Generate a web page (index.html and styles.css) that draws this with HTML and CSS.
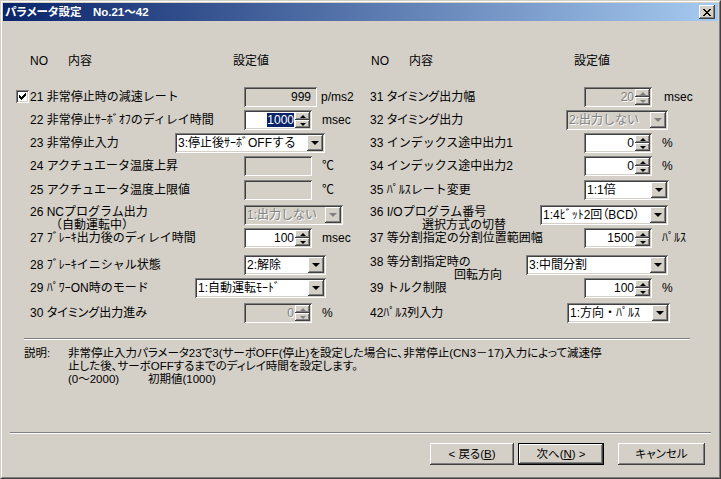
FILE: index.html
```html
<!DOCTYPE html>
<html lang="ja">
<head>
<meta charset="utf-8">
<title>パラメータ設定</title>
<link rel="stylesheet" href="styles.css">
</head>
<body>
<div class="window">
  <div class="frame">
    <div class="titlebar">
      <span class="title">パラメータ設定　No.21～42</span>
      <span class="closebtn raised"><svg width="8" height="7" viewBox="0 0 8 7"><path d="M0 0h2v1H0zM6 0h2v1H6zM1 1h2v1H1zM5 1h2v1H5zM2 2h4v1H2zM3 3h2v1H3zM2 4h4v1H2zM1 5h2v1H1zM5 5h2v1H5zM0 6h2v1H0zM6 6h2v1H6z" fill="#000"/></svg></span>
    </div>
    <div class="client">
      <div class="columns">
        <div class="col col-left">
          <div class="head"><span class="h-no">NO</span><span class="h-name">内容</span><span class="h-val">設定値</span></div>
          <div class="rows">
            <div class="row">
              <span class="gut"><span class="checkbox"><svg width="7" height="7" viewBox="0 0 7 7"><path d="M6 0h1v3H6zM5 1h1v3H5zM4 2h1v3H4zM3 3h1v3H3zM2 4h1v3H2zM1 3h1v3H1zM0 2h1v3H0z" fill="#000"/></svg></span></span>
              <span class="lbl">21 非常停止時の減速レート</span>
              <span class="field w73">999</span>
              <span class="unit u4">p/ms2</span>
            </div>
            <div class="row">
              <span class="gut"></span>
              <span class="lbl">22 非常停止ｻｰﾎﾞｵﾌのディレイ時間</span>
              <span class="spin"><span class="val"><span class="sel">1000</span></span><span class="btns"><span class="sb up"></span><span class="sb dn"></span></span></span>
              <span class="unit">msec</span>
            </div>
            <div class="row">
              <span class="gut"></span>
              <span class="lbl">23 非常停止入力</span>
              <span class="combo c23"><span class="val">3:停止後ｻｰﾎﾞOFFする</span><span class="dd"></span></span>
            </div>
            <div class="row">
              <span class="gut"></span>
              <span class="lbl">24 アクチュエータ温度上昇</span>
              <span class="field"></span>
              <span class="unit">℃</span>
            </div>
            <div class="row">
              <span class="gut"></span>
              <span class="lbl">25 アクチュエータ温度上限値</span>
              <span class="field"></span>
              <span class="unit">℃</span>
            </div>
            <div class="row">
              <span class="gut"></span>
              <span class="lbl two">26 NCプログラム出力<span class="sub s26">（自動運転中）</span></span>
              <span class="combo dis c26"><span class="val">1:出力しない</span><span class="dd"></span></span>
            </div>
            <div class="row">
              <span class="gut"></span>
              <span class="lbl">27 ﾌﾞﾚｰｷ出力後のディレイ時間</span>
              <span class="spin"><span class="val">100</span><span class="btns"><span class="sb up"></span><span class="sb dn"></span></span></span>
              <span class="unit">msec</span>
            </div>
            <div class="row">
              <span class="gut"></span>
              <span class="lbl">28 ﾌﾞﾚｰｷイニシャル状態</span>
              <span class="combo c28"><span class="val">2:解除</span><span class="dd"></span></span>
            </div>
            <div class="row">
              <span class="gut"></span>
              <span class="lbl">29 ﾊﾟﾜｰON時のモード</span>
              <span class="combo c29"><span class="val">1:自動運転ﾓｰﾄﾞ</span><span class="dd"></span></span>
            </div>
            <div class="row">
              <span class="gut"></span>
              <span class="lbl">30 <span class="prop">タイミング</span>出力進み</span>
              <span class="spin dis"><span class="val">0</span><span class="btns"><span class="sb up"></span><span class="sb dn"></span></span></span>
              <span class="unit">%</span>
            </div>
          </div>
        </div>
        <div class="col col-right">
          <div class="head"><span class="h-no">NO</span><span class="h-name">内容</span><span class="h-val">設定値</span></div>
          <div class="rows">
            <div class="row">
              <span class="gut"></span>
              <span class="lbl">31 <span class="prop">タイミング</span>出力幅</span>
              <span class="spin dis"><span class="val">20</span><span class="btns"><span class="sb up"></span><span class="sb dn"></span></span></span>
              <span class="unit u12">msec</span>
            </div>
            <div class="row">
              <span class="gut"></span>
              <span class="lbl">32 <span class="prop">タイミング</span>出力</span>
              <span class="combo dis c32"><span class="val">2:出力しない</span><span class="dd"></span></span>
            </div>
            <div class="row">
              <span class="gut"></span>
              <span class="lbl">33 インデックス途中出力1</span>
              <span class="spin"><span class="val">0</span><span class="btns"><span class="sb up"></span><span class="sb dn"></span></span></span>
              <span class="unit">%</span>
            </div>
            <div class="row">
              <span class="gut"></span>
              <span class="lbl">34 インデックス途中出力2</span>
              <span class="spin"><span class="val">0</span><span class="btns"><span class="sb up"></span><span class="sb dn"></span></span></span>
              <span class="unit">%</span>
            </div>
            <div class="row">
              <span class="gut"></span>
              <span class="lbl">35 ﾊﾟﾙｽレート変更</span>
              <span class="combo c35"><span class="val">1:1倍</span><span class="dd"></span></span>
            </div>
            <div class="row">
              <span class="gut"></span>
              <span class="lbl two">36 I/Oプログラム番号<span class="sub s36">選択方式の切替</span></span>
              <span class="combo c36"><span class="val prop">1:4ﾋﾞｯﾄ2回（BCD）</span><span class="dd"></span></span>
            </div>
            <div class="row">
              <span class="gut"></span>
              <span class="lbl">37 等分割指定の分割位置範囲幅</span>
              <span class="spin"><span class="val">1500</span><span class="btns"><span class="sb up"></span><span class="sb dn"></span></span></span>
              <span class="unit">ﾊﾟﾙｽ</span>
            </div>
            <div class="row">
              <span class="gut"></span>
              <span class="lbl two">38 等分割指定時の<span class="sub s38">回転方向</span></span>
              <span class="combo c38"><span class="val">3:中間分割</span><span class="dd"></span></span>
            </div>
            <div class="row">
              <span class="gut"></span>
              <span class="lbl">39 トルク制限</span>
              <span class="spin"><span class="val">100</span><span class="btns"><span class="sb up"></span><span class="sb dn"></span></span></span>
              <span class="unit">%</span>
            </div>
            <div class="row">
              <span class="gut"></span>
              <span class="lbl">42ﾊﾟﾙｽ列入力</span>
              <span class="combo c42"><span class="val">1:方向・ﾊﾟﾙｽ</span><span class="dd"></span></span>
            </div>
          </div>
        </div>
      </div>
      <div class="rule"></div>
      <div class="desc">
        <span class="desc-label">説明:</span>
        <div class="desc-body">
          <div>非常停止入力パラメータ23で3(サーボOFF(停止)を設定した場合に、非常停止(CN3－17)入力によって減速停</div>
          <div>止した後、サーボOFFするまでのディレイ時間を設定します。</div>
          <div><span class="range">(0～2000)</span>初期値(1000)</div>
        </div>
      </div>
      <div class="spacer"></div>
      <div class="footer-rule"></div>
      <div class="buttons">
        <span class="btn back">&lt; 戻る(<u>B</u>)</span>
        <span class="btn next default">次へ(<u>N</u>) &gt;</span>
        <span class="btn cancel">キャンセル</span>
      </div>
    </div>
  </div>
</div>
</body>
</html>
```

FILE: styles.css
```css
* { box-sizing: border-box; }
html, body { margin: 0; padding: 0; background: #d4d0c8; }
body {
  font-family: "Liberation Sans", "Noto Sans CJK JP", sans-serif;
  font-size: 11.5px;
  color: #000;
  font-feature-settings: "palt";
}

.window {
  width: 721px;
  height: 479px;
  border: 1px solid;
  border-color: #d4d0c8 #404040 #404040 #d4d0c8;
}
.frame {
  height: 100%;
  border: 1px solid;
  border-color: #fff #808080 #808080 #fff;
  padding: 1px;
  display: flex;
  flex-direction: column;
}

.raised {
  background: #d4d0c8;
  box-shadow: inset -1px -1px #404040, inset 1px 1px #fff, inset -2px -2px #808080, inset 2px 2px #d4d0c8;
}

/* title bar */
.titlebar {
  flex: none;
  height: 18px;
  display: flex;
  align-items: center;
  justify-content: space-between;
  padding: 0 3px 0 2px;
  background: linear-gradient(to right, #0a246a, #a6caf0);
}
.title {
  color: #fff;
  font-weight: bold;
  font-size: 11.5px;
  line-height: 18px;
  white-space: nowrap;
}
.closebtn {
  width: 16px;
  height: 14px;
  display: flex;
  align-items: center;
  justify-content: center;
}

/* client */
.client {
  flex: 1;
  display: flex;
  flex-direction: column;
  padding: 30px 13px 11px 13px;
}
.columns {
  display: flex;
  font-size: 12px;
  font-feature-settings: normal;
}
.columns .prop { font-feature-settings: "palt"; }
.col-left { width: 339px; flex: none; }
.col-right { flex: 1; }

.head {
  display: flex;
  height: 20px;
  line-height: 20px;
  padding-left: 14px;
}
.col-right .head { padding-left: 16px; }
.h-no { width: 38px; }
.h-name { width: 165px; }

.rows {
  margin-top: 16px;
  display: grid;
  grid-template-rows: 23px 23px 23px 24px 25px 23px 27px 23px 25px 20px;
}
.row {
  display: flex;
  align-items: flex-start;
  height: 20px;
}
.gut { width: 15px; flex: none; padding-top: 3px; }
.col-left .gut { width: 14px; }
.lbl {
  width: 214px;
  flex: none;
  line-height: 20px;
  white-space: nowrap;
}
.lbl.two { line-height: 14px; }
.sub { display: block; line-height: 13px; }
.s26 { padding-left: 20px; }
.s36 { padding-left: 52px; }
.s38 { padding-left: 84px; }

.unit { margin-left: 10px; line-height: 20px; white-space: nowrap; }
.unit.u4 { margin-left: 4px; }
.unit.u12 { margin-left: 12px; }

/* checkbox */
.checkbox {
  display: flex;
  align-items: center;
  justify-content: center;
  width: 13px;
  height: 13px;
  background: #fff;
  box-shadow: inset 1px 1px #808080, inset -1px -1px #fff, inset 2px 2px #404040, inset -2px -2px #d4d0c8;
}

/* static fields */
.field {
  flex: none;
  width: 68px;
  height: 20px;
  padding: 2px 6px 2px 2px;
  background: #d4d0c8;
  text-align: right;
  line-height: 16px;
  box-shadow: inset 1px 1px #808080, inset -1px -1px #fff, inset 2px 2px #404040, inset -2px -2px #d4d0c8;
}
.field.w73 { width: 73px; }

/* spinner */
.spin {
  flex: none;
  display: flex;
  width: 68px;
  height: 20px;
  padding: 2px;
  background: #fff;
  box-shadow: inset 1px 1px #808080, inset -1px -1px #fff, inset 2px 2px #404040, inset -2px -2px #d4d0c8;
}
.spin .val {
  flex: 1;
  text-align: right;
  line-height: 16px;
  padding-right: 1px;
  white-space: nowrap;
  overflow: hidden;
}
.sel { background: #0a246a; color: #fff; }
.btns { width: 15px; flex: none; display: flex; flex-direction: column; }
.sb {
  flex: 1;
  display: flex;
  align-items: center;
  justify-content: center;
  background: #d4d0c8;
  box-shadow: inset -1px -1px #404040, inset 1px 1px #fff, inset -2px -2px #808080, inset 2px 2px #d4d0c8;
}
.sb::before {
  content: "";
  border-left: 3px solid transparent;
  border-right: 3px solid transparent;
}
.sb.up::before { border-bottom: 3px solid #000; }
.sb.dn::before { border-top: 3px solid #000; }
.spin.dis { background: #d4d0c8; color: #808080; text-shadow: 1px 1px 0 #fff; }
.spin.dis .sb.up::before { border-bottom-color: #808080; }
.spin.dis .sb.dn::before { border-top-color: #808080; }

/* combo */
.combo {
  flex: none;
  display: flex;
  height: 20px;
  padding: 2px;
  background: #fff;
  box-shadow: inset 1px 1px #808080, inset -1px -1px #fff, inset 2px 2px #404040, inset -2px -2px #d4d0c8;
}
.combo .val {
  flex: 1;
  line-height: 16px;
  padding-left: 1px;
  white-space: nowrap;
  overflow: hidden;
}
.dd {
  width: 16px;
  flex: none;
  display: flex;
  align-items: center;
  justify-content: center;
  background: #d4d0c8;
  box-shadow: inset -1px -1px #404040, inset 1px 1px #fff, inset -2px -2px #808080, inset 2px 2px #d4d0c8;
}
.dd::before {
  content: "";
  border-left: 4px solid transparent;
  border-right: 4px solid transparent;
  border-top: 4px solid #000;
}
.combo.dis { background: #d4d0c8; color: #808080; }
.combo.dis .val { text-shadow: 1px 1px 0 #fff; }
.combo.dis .dd::before { border-top-color: #808080; }

.c23 { width: 150px; margin-left: -69px; }
.c26 { width: 99px; }
.c28 { width: 82px; }
.c29 { width: 131px; margin-left: -49px; }
.c32 { width: 102px; margin-left: -18px; }
.c35 { width: 85px; }
.c36 { width: 128px; margin-left: -44px; }
.c38 { width: 142px; margin-left: -58px; }
.c42 { width: 103px; margin-left: -17px; }

/* description */
.rule {
  height: 2px;
  width: 666px;
  margin: 15px 0 0 8px;
  border-top: 1px solid #808080;
  border-bottom: 1px solid #fff;
}
.desc {
  display: flex;
  margin: 7px 0 0 8px;
  line-height: 13px;
}
.desc-label { width: 44px; flex: none; }
.desc-body div { white-space: nowrap; }
.range { display: inline-block; width: 80px; }

.spacer { flex: 1; }
.footer-rule {
  height: 2px;
  margin: 0 -6px;
  border-top: 1px solid #808080;
  border-bottom: 1px solid #fff;
}

/* buttons */
.buttons {
  margin-top: 9px;
  display: flex;
  justify-content: flex-end;
}
.btn {
  height: 22px;
  line-height: 22px;
  text-align: center;
  white-space: nowrap;
  background: #d4d0c8;
  box-shadow: inset -1px -1px #404040, inset 1px 1px #fff, inset -2px -2px #808080, inset 2px 2px #d4d0c8;
}
.btn.default {
  box-shadow: inset 0 0 0 1px #000, inset -2px -2px #404040, inset 2px 2px #fff, inset -3px -3px #808080;
}
.back { width: 84px; }
.next { width: 86px; margin-left: 4px; }
.cancel { width: 87px; margin-left: 14px; }
```
